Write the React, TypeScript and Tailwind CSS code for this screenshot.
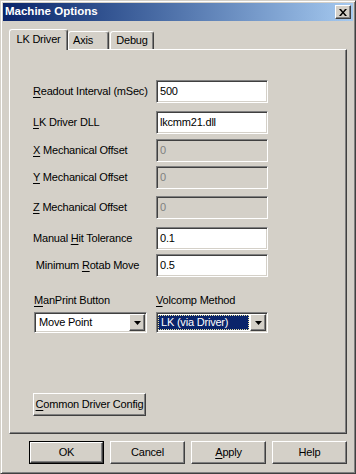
import React from "react";

const font = { fontFamily: '"Liberation Sans", Arial, sans-serif' };

const raised =
  "border border-t-white border-l-white border-r-[#404040] border-b-[#404040] shadow-[inset_-1px_-1px_0_#808080]";
const sunken =
  "border border-t-[#808080] border-l-[#808080] border-r-white border-b-white shadow-[inset_1px_1px_0_#404040,inset_-1px_-1px_0_#d4d0c8]";

function U({ c }: { c: string }) {
  return <span className="underline underline-offset-[2px] decoration-1">{c}</span>;
}

function Field({ value, disabled }: { value: string; disabled?: boolean }) {
  return (
    <div
      className={`${sunken} w-[112px] h-[23px] flex items-center pl-[3px] ${
        disabled ? "bg-[#d4d0c8] text-[#808080]" : "bg-white text-black"
      }`}
    >
      {value}
    </div>
  );
}

function Row({ label, value, disabled, mt }: { label: React.ReactNode; value: string; disabled?: boolean; mt: string }) {
  return (
    <div className={`flex items-center ${mt}`}>
      <div className="w-[123px] text-black whitespace-nowrap">{label}</div>
      <Field value={value} disabled={disabled} />
    </div>
  );
}

function Arrow() {
  return (
    <div className={`${raised} w-[16px] h-[17px] bg-[#d4d0c8] flex items-center justify-center`}>
      <svg width="7" height="4" viewBox="0 0 7 4">
        <path d="M0 0h7L3.5 4z" fill="#000" />
      </svg>
    </div>
  );
}

function Btn({ children, def, w = "w-[75px]" }: { children: React.ReactNode; def?: boolean; w?: string }) {
  const inner = (
    <div className={`${raised} h-full w-full bg-[#d4d0c8] flex items-center justify-center text-black whitespace-nowrap`}>
      {children}
    </div>
  );
  return def ? (
    <div className={`${w} h-[23px] border border-black`}>{inner}</div>
  ) : (
    <div className={`${w} h-[23px]`}>{inner}</div>
  );
}

export default function App() {
  return (
    <div
      style={font}
      className="w-[356px] h-[474px] bg-[#d4d0c8] text-[11px] tracking-[-0.2px] border border-t-[#d4d0c8] border-l-[#d4d0c8] border-r-[#404040] border-b-[#404040] shadow-[inset_1px_1px_0_white,inset_-1px_-1px_0_#808080] p-[2px] flex flex-col"
    >
      {/* title bar */}
      <div className="h-[18px] bg-gradient-to-r from-[#0a246a] to-[#a6caf0] flex items-center justify-between pl-[2px] pr-[2px]">
        <span className="text-white font-bold text-[11.5px] tracking-normal leading-none whitespace-nowrap">Machine Options</span>
        <div className={`${raised} w-[16px] h-[14px] bg-[#d4d0c8] flex items-center justify-center`}>
          <svg width="8" height="7" viewBox="0 0 8 7">
            <path d="M0 0h2l2 2.5L6 0h2L5 3.5 8 7H6L4 4.5 2 7H0l3-3.5z" fill="#000" />
          </svg>
        </div>
      </div>

      <div className="px-[6px] flex flex-col">
        {/* tabs */}
        <div className="mt-[8px] h-[20px] flex items-end text-black whitespace-nowrap">
          <div className="relative z-10 -mb-[1px] w-[59px] h-[21px] bg-[#d4d0c8] border-t border-l border-t-white border-l-white border-r border-r-[#404040] shadow-[inset_-1px_0_0_#808080] rounded-t-[3px] flex items-center justify-center pb-[1px]">
            LK Driver
          </div>
          <div className="w-[41px] h-[18px] border-t border-l border-t-white border-l-white border-r border-r-[#404040] shadow-[inset_-1px_0_0_#808080] rounded-t-[3px] flex items-center pl-[4px]">
            Axis
          </div>
          <div className="w-[44px] h-[18px] ml-[1px] border-t border-l border-t-white border-l-white border-r border-r-[#404040] shadow-[inset_-1px_0_0_#808080] rounded-t-[3px] flex items-center justify-center">
            Debug
          </div>
        </div>

        {/* panel */}
        <div className={`${raised} h-[385px] pl-[23px] pt-[30px] flex flex-col`}>
          <Row mt="mt-0" label={<><U c="R" />eadout Interval (mSec)</>} value="500" />
          <Row mt="mt-[8px]" label={<><U c="L" />K Driver DLL</>} value="lkcmm21.dll" />
          <Row mt="mt-[5px]" label={<><U c="X" /> Mechanical Offset</>} value="0" disabled />
          <Row mt="mt-[4px]" label={<><U c="Y" /> Mechanical Offset</>} value="0" disabled />
          <Row mt="mt-[7px]" label={<><U c="Z" /> Mechanical Offset</>} value="0" disabled />
          <Row mt="mt-[8px]" label={<>Manual <U c="H" />it Tolerance</>} value="0.1" />
          <Row mt="mt-[4px]" label={<>&nbsp;Minimum <U c="R" />otab Move</>} value="0.5" />

          <div className="mt-[15px] h-[16px] flex items-center text-black pl-[1px] whitespace-nowrap">
            <div className="w-[122px]"><U c="M" />anPrint Button</div>
            <div><U c="V" />olcomp Method</div>
          </div>
          <div className="mt-[4px] flex pl-[1px]">
            <div className={`${sunken} w-[113px] h-[21px] bg-white flex items-stretch p-[1px] mr-[9px]`}>
              <div className="flex-1 flex items-center pl-[3px] text-black whitespace-nowrap">Move Point</div>
              <Arrow />
            </div>
            <div className={`${sunken} w-[112px] h-[21px] bg-white flex items-stretch p-[1px]`}>
              <div className="flex-1 flex items-center pr-[1px] py-[1px]">
                <div className="h-full w-full bg-[#0a246a] border border-dotted border-[#e8e0a0] flex items-center pl-[2px] text-white whitespace-nowrap">
                  LK (via Driver)
                </div>
              </div>
              <Arrow />
            </div>
          </div>

          <div className="mt-[60px]">
            <Btn w="w-[113px]">
              <U c="C" />ommon Driver Config
            </Btn>
          </div>
        </div>

        {/* bottom buttons */}
        <div className="mt-[7px] flex justify-end gap-[6px]">
          <Btn def>OK</Btn>
          <Btn>Cancel</Btn>
          <Btn><U c="A" />pply</Btn>
          <Btn>Help</Btn>
        </div>
      </div>
    </div>
  );
}
